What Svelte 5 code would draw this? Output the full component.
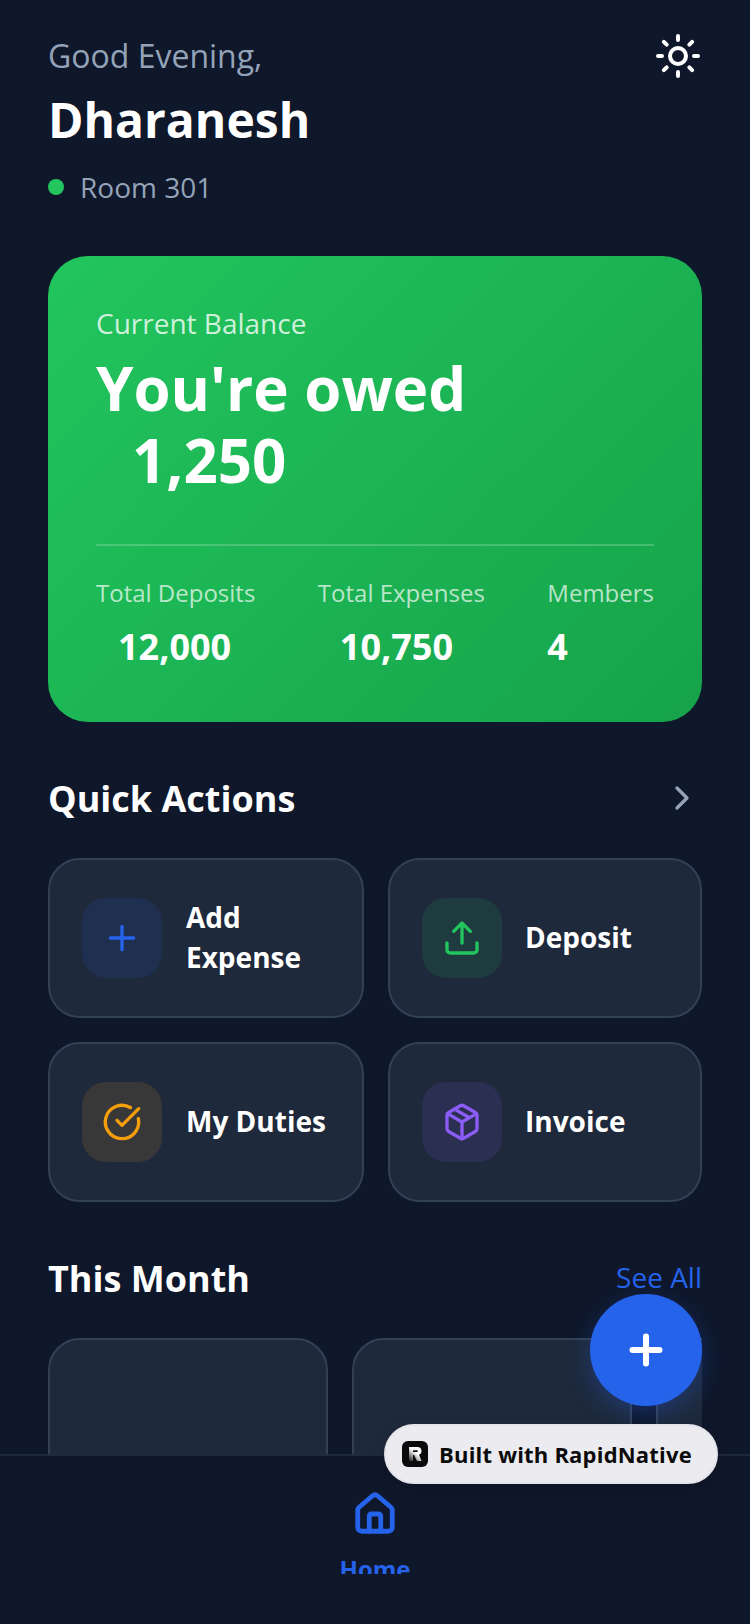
<script>
  const stats = [
    { label: 'Total Deposits', value: '12,000', indent: true },
    { label: 'Total Expenses', value: '10,750', indent: true },
    { label: 'Members', value: '4', indent: false }
  ];
</script>

<div class="screen">
  <main class="content">
    <header class="header">
      <div>
        <p class="greeting">Good Evening,</p>
        <h1 class="name">Dharanesh</h1>
        <div class="room"><span class="dot"></span><span>Room 301</span></div>
      </div>
      <svg class="sun" viewBox="0 0 24 24" fill="none" stroke="#fff" stroke-width="2" stroke-linecap="round" stroke-linejoin="round">
        <circle cx="12" cy="12" r="4" />
        <path d="M12 2v2M12 20v2M4.93 4.93l1.41 1.41M17.66 17.66l1.41 1.41M2 12h2M20 12h2M6.34 17.66l-1.41 1.41M19.07 4.93l-1.41 1.41" />
      </svg>
    </header>

    <section class="balance">
      <p class="balance-label">Current Balance</p>
      <p class="balance-title">You're owed</p>
      <p class="balance-amount">1,250</p>
      <div class="stats">
        {#each stats as s}
          <div>
            <p class="stat-label">{s.label}</p>
            <p class="stat-value" class:indent={s.indent}>{s.value}</p>
          </div>
        {/each}
      </div>
    </section>

    <div class="section-head qa-head">
      <h2>Quick Actions</h2>
      <svg class="chev" viewBox="0 0 24 24" fill="none" stroke="#94a3b8" stroke-width="2" stroke-linecap="round" stroke-linejoin="round"><path d="m9 18 6-6-6-6" /></svg>
    </div>

    <div class="actions">
      <div class="tile">
        <div class="ico blue">
          <svg viewBox="0 0 24 24" fill="none" stroke="#2563eb" stroke-width="2" stroke-linecap="round" stroke-linejoin="round"><path d="M5 12h14M12 5v14" /></svg>
        </div>
        <span class="tile-text">Add Expense</span>
      </div>
      <div class="tile">
        <div class="ico green">
          <svg viewBox="0 0 24 24" fill="none" stroke="#22c55e" stroke-width="2" stroke-linecap="round" stroke-linejoin="round"><path d="M21 15v4a2 2 0 0 1-2 2H5a2 2 0 0 1-2-2v-4M17 8l-5-5-5 5M12 3v12" /></svg>
        </div>
        <span class="tile-text">Deposit</span>
      </div>
      <div class="tile">
        <div class="ico orange">
          <svg viewBox="0 0 24 24" fill="none" stroke="#f59e0b" stroke-width="2" stroke-linecap="round" stroke-linejoin="round"><path d="M21.8 10A10 10 0 1 1 17 3.34" /><path d="m9 11 3 3L22 4" /></svg>
        </div>
        <span class="tile-text">My Duties</span>
      </div>
      <div class="tile">
        <div class="ico purple">
          <svg viewBox="0 0 24 24" fill="none" stroke="#8b5cf6" stroke-width="2" stroke-linecap="round" stroke-linejoin="round"><path d="M21 8a2 2 0 0 0-1-1.73l-7-4a2 2 0 0 0-2 0l-7 4A2 2 0 0 0 3 8v8a2 2 0 0 0 1 1.73l7 4a2 2 0 0 0 2 0l7-4A2 2 0 0 0 21 16Z" /><path d="m7.5 4.27 9 5.15M3.29 7 12 12l8.71-5M12 22V12" /></svg>
        </div>
        <span class="tile-text">Invoice</span>
      </div>
    </div>

    <div class="section-head month-head">
      <h2>This Month</h2>
      <span class="see-all">See All</span>
    </div>

    <div class="month-row">
      <div class="month-card"></div>
      <div class="month-card"></div>
      <div class="month-card"></div>
    </div>
  </main>

  <nav class="tabbar">
    <svg class="home" viewBox="0 0 24 24" fill="none" stroke="#2563eb" stroke-width="2.5" stroke-linecap="round" stroke-linejoin="round"><path d="M15 21v-8a1 1 0 0 0-1-1h-4a1 1 0 0 0-1 1v8" /><path d="M3 10a2 2 0 0 1 .709-1.528l7-5.999a2 2 0 0 1 2.582 0l7 5.999A2 2 0 0 1 21 10v9a2 2 0 0 1-2 2H5a2 2 0 0 1-2-2z" /></svg>
    <span class="home-label">Home</span>
  </nav>

  <button class="fab" aria-label="Add">
    <svg viewBox="0 0 24 24" fill="none" stroke="#fff" stroke-width="3" stroke-linecap="round"><path d="M5.25 12h13.5M12 5.25v13.5" /></svg>
  </button>

  <div class="badge">
    <svg class="logo" viewBox="0 0 26 26">
      <defs>
        <linearGradient id="rfade" x1="7" y1="20" x2="14" y2="12" gradientUnits="userSpaceOnUse">
          <stop offset="0" stop-color="#1a1a1a" />
          <stop offset="1" stop-color="#fff" />
        </linearGradient>
      </defs>
      <rect width="26" height="26" rx="6" fill="#0b0b0b" />
      <path fill-rule="evenodd" d="M7 6H15.5A4 4 0 0 1 17 13.7L19.5 20H15L12 14H11V20H7ZM11 9.2V11H15A.9.9 0 0 0 15 9.2Z" fill="url(#rfade)" />
    </svg>
    <span>Built with RapidNative</span>
  </div>
</div>

<style>
  :global(body) {
    margin: 0;
    background: #0f172a;
  }
  * {
    box-sizing: border-box;
  }
  p, h1, h2 {
    margin: 0;
  }
  .screen {
    position: relative;
    width: 750px;
    height: 1624px;
    background: #0f172a;
    font-family: "Open Sans", sans-serif;
    display: flex;
    flex-direction: column;
    overflow: hidden;
  }
  .content {
    flex: 1;
    min-height: 0;
    overflow: hidden;
    padding: 32px 48px 0;
  }
  .header {
    display: flex;
    justify-content: space-between;
    align-items: flex-start;
  }
  .greeting {
    font-size: 32px;
    line-height: 48px;
    color: #94a3b8;
  }
  .name {
    font-size: 48px;
    line-height: 64px;
    font-weight: 700;
    color: #fff;
    margin-top: 8px;
  }
  .room {
    display: flex;
    align-items: center;
    gap: 16px;
    margin-top: 15px;
    font-size: 28px;
    line-height: 40px;
    color: #94a3b8;
  }
  .dot {
    width: 16px;
    height: 16px;
    border-radius: 50%;
    background: #22c55e;
  }
  .sun {
    width: 48px;
    height: 48px;
  }
  .balance {
    margin-top: 49px;
    height: 466px;
    border-radius: 40px;
    padding: 47px 48px 48px;
    background: linear-gradient(135deg, #22c55e, #16a34a);
    color: #fff;
  }
  .balance-label {
    font-size: 28px;
    line-height: 40px;
    color: rgba(255, 255, 255, 0.8);
  }
  .balance-title, .balance-amount {
    font-size: 60px;
    line-height: 72px;
    font-weight: 700;
  }
  .balance-title {
    margin-top: 9px;
  }
  .balance-amount {
    padding-left: 36px;
  }
  .stats {
    display: flex;
    justify-content: space-between;
    margin-top: 48px;
    padding-top: 31px;
    border-top: 2px solid rgba(255, 255, 255, 0.2);
  }
  .stat-label {
    font-size: 24px;
    line-height: 32px;
    color: rgba(255, 255, 255, 0.7);
  }
  .stat-value {
    font-size: 36px;
    line-height: 44px;
    font-weight: 700;
    margin-top: 16px;
  }
  .stat-value.indent {
    padding-left: 22px;
  }
  .section-head {
    display: flex;
    justify-content: space-between;
    align-items: center;
  }
  .section-head h2 {
    font-size: 36px;
    line-height: 48px;
    font-weight: 700;
    color: #fff;
  }
  .qa-head {
    margin-top: 53px;
  }
  .chev {
    width: 40px;
    height: 40px;
    margin-bottom: 2px;
  }
  .actions {
    display: grid;
    grid-template-columns: 316px 314px;
    gap: 24px;
    margin-top: 35px;
  }
  .tile {
    height: 160px;
    display: flex;
    align-items: center;
    gap: 24px;
    padding: 0 32px;
    border: 2px solid #334155;
    border-radius: 32px;
    background: #1e293b;
    font-size: 28px;
    line-height: 40px;
    font-weight: 700;
    color: #fff;
  }
  .tile:nth-child(even) {
    gap: 23px;
  }
  .tile-text {
    padding-bottom: 2px;
  }
  .ico {
    flex: none;
    width: 80px;
    height: 80px;
    border-radius: 24px;
    display: flex;
    align-items: center;
    justify-content: center;
  }
  .ico svg {
    width: 40px;
    height: 40px;
  }
  .blue { background: rgba(37, 99, 235, 0.125); }
  .green { background: rgba(34, 197, 94, 0.125); }
  .orange { background: #383838; }
  .purple { background: rgba(139, 92, 246, 0.125); }
  .month-head {
    margin-top: 53px;
  }
  .see-all {
    font-size: 28px;
    line-height: 40px;
    padding-bottom: 4px;
    color: #2563eb;
  }
  .month-row {
    display: flex;
    gap: 24px;
    margin-top: 35px;
    overflow: hidden;
  }
  .month-card {
    flex: none;
    width: 280px;
    height: 240px;
    border: 2px solid #334155;
    border-radius: 32px;
    background: #1e293b;
  }
  .tabbar {
    flex: none;
    height: 170px;
    position: relative;
    background: #0f172a;
    border-top: 2px solid #1e293b;
    display: flex;
    flex-direction: column;
    align-items: center;
    padding-top: 35px;
  }
  .home {
    width: 46px;
    height: 46px;
  }
  .home-label {
    height: 22px;
    margin-top: 15px;
    overflow: hidden;
    font-size: 24px;
    line-height: 34px;
    font-weight: 700;
    color: #2563eb;
  }
  .fab {
    position: absolute;
    left: 590px;
    top: 1294px;
    width: 112px;
    height: 112px;
    border: 0;
    padding: 0;
    border-radius: 50%;
    background: #2563eb;
    box-shadow: 0 8px 24px rgba(37, 99, 235, 0.3);
    display: flex;
    align-items: center;
    justify-content: center;
  }
  .fab svg {
    width: 48px;
    height: 48px;
  }
  .badge {
    position: absolute;
    left: 384px;
    top: 1424px;
    width: 334px;
    height: 60px;
    border-radius: 30px;
    border: 2px solid #e3e5ea;
    background: #ececf0;
    box-shadow: 0 4px 16px rgba(0, 0, 0, 0.15);
    display: flex;
    align-items: center;
    gap: 11px;
    padding-left: 16px;
    font-size: 22px;
    letter-spacing: 0.2px;
    font-weight: 700;
    color: #0b0b0b;
    white-space: nowrap;
  }
  .logo {
    width: 26px;
    height: 26px;
    flex: none;
  }
</style>
